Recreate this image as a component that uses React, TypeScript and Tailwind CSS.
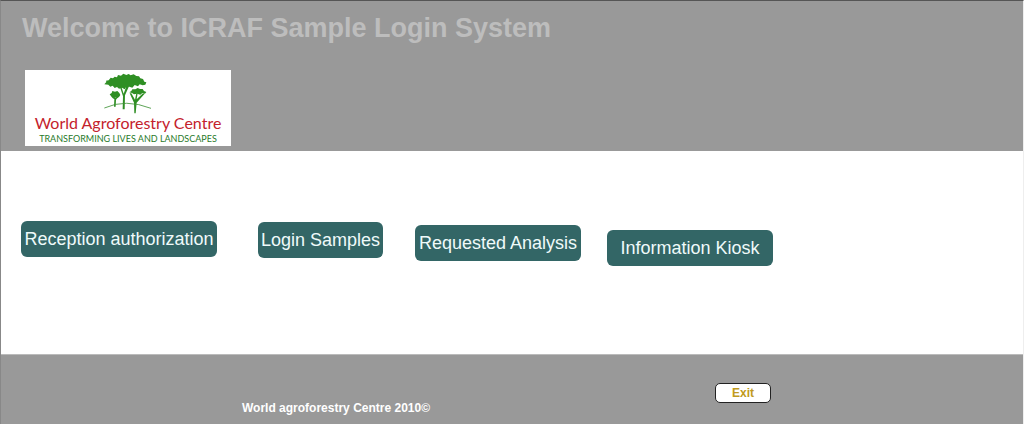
function TreesMark() {
  return (
    <svg viewBox="24 12 150 126" className="h-[42px] w-[50px] shrink-0" aria-hidden="true">
      <g fill="#2f8f24">
        <path d="M28 49 L34 42 L33 38 L41 37 L47 29 L54 31 L59 26 L66 28 L69 21 L78 23 L85 17 L94 21 L101 18 L107 22 L116 19 L124 24 L132 25 L136 31 L144 33 L148 41 L154 43 L151 50 L143 52 L134 49 L129 55 L119 51 L112 59 L103 56 L93 58 L89 64 L81 59 L72 62 L66 57 L59 60 L53 53 L46 56 L40 50 Z" />
        <path d="M44 79 L50 75 L52 69 L60 71 L67 69 L73 75 L76 81 L72 87 L66 91 L61 88 L55 92 L50 87 Z" />
        <path d="M103 73 L109 69 L112 64 L121 64 L128 60 L135 63 L143 63 L147 69 L154 72 L150 77 L142 75 L136 80 L126 77 L117 79 L111 75 Z" />
        <path d="M83 124 L84 85 L75 57 L79 56 L86 77 L94 55 L102 55 L90 82 L89 124 Z" />
        <path d="M57 116 L58 94 L50 84 L58 89 L60 82 L62 90 L72 83 L63 95 L62 116 Z" />
        <path d="M118 136 L117 104 L104 76 L109 76 L120 95 L124 76 L128 76 L125 94 L144 76 L149 77 L125 104 L122 136 Z" />
      </g>
      <path d="M28 120 Q92 91 168 121" fill="none" stroke="#3f9236" strokeWidth="2.5" />
    </svg>
  );
}

function Logo() {
  return (
    <div className="flex h-[76px] w-[206px] flex-col items-center bg-white pt-0.5 whitespace-nowrap">
      <TreesMark />
      <p className="font-['Lato',sans-serif] text-[16px] leading-[18px] text-[#c4222c]">World Agroforestry Centre</p>
      <p className="font-['Lato',sans-serif] text-[9px] leading-[14px] text-[#287a2a] uppercase">
        Transforming lives and landscapes
      </p>
    </div>
  );
}

const action =
  "h-9 shrink-0 rounded-md bg-[#336666] text-center text-[18px] leading-9 whitespace-nowrap text-[#effafa]";

export default function App() {
  return (
    <div className="flex min-h-screen flex-col border-t border-r border-l border-t-[#555555] border-r-[#eeeeee] border-l-[#888888] bg-white font-['Liberation_Sans',Arial,sans-serif]">
      <header className="h-[150px] bg-[#999999] pt-[9px] pl-[21px]">
        <h1 className="text-[27px] leading-9 font-bold text-[#bdbdbd]">Welcome to ICRAF Sample Login System</h1>
        <div className="pt-6 pl-[3px]">
          <Logo />
        </div>
      </header>

      <main className="flex h-[203px] items-start pt-[70px] pl-5">
        <button type="button" className={`${action} w-[196px]`}>Reception authorization</button>
        <button type="button" className={`${action} mt-px ml-[41px] w-[125px]`}>Login Samples</button>
        <button type="button" className={`${action} mt-1 ml-8 w-[166px]`}>Requested Analysis</button>
        <button type="button" className={`${action} mt-[9px] ml-[26px] w-[166px]`}>Information Kiosk</button>
      </main>

      <footer className="flex flex-1 items-start border-t border-[#bbbbbb] bg-[#999999] pt-7 pl-[241px]">
        <p className="w-[473px] pt-[17px] text-[12px] leading-4 font-bold text-white">World agroforestry Centre 2010©</p>
        <button
          type="button"
          className="h-5 w-14 rounded-[5px] border border-[#222222] bg-white text-[12px] leading-4 font-bold text-[#c09a20]"
        >
          Exit
        </button>
      </footer>
    </div>
  );
}
